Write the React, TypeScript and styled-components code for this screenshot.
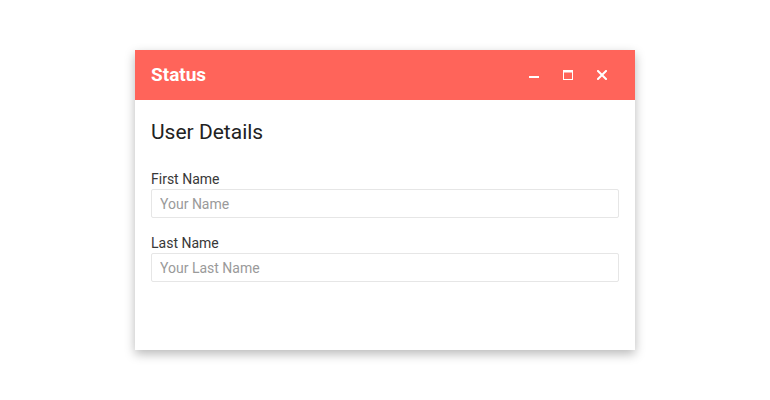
import styled, { createGlobalStyle } from "styled-components";

const GlobalStyle = createGlobalStyle`
    html, body {
        margin: 0;
        padding: 0;
        background: #ffffff;
    }
    body {
        font-family: Roboto, "Liberation Sans", Arial, sans-serif;
    }
`;

const Page = styled.div`
    width: 770px;
    height: 400px;
    display: flex;
    justify-content: center;
    padding-top: 50px;
    box-sizing: border-box;
`;

const Window = styled.div`
    width: 500px;
    height: 300px;
    background: #ffffff;
    display: flex;
    flex-direction: column;
    box-shadow: 0 4px 10px rgba(0, 0, 0, 0.28);
`;

const TitleBar = styled.div`
    height: 50px;
    background-color: #ff645a;
    display: flex;
    align-items: center;
    padding: 0 16px;
`;

const Title = styled.h1`
    flex: 1;
    margin: 0 0 1px;
    color: #ffffff;
    font-size: 19px;
    font-weight: 700;
`;

const Controls = styled.div`
    display: flex;
    align-items: center;
    gap: 14px;
    margin-right: 7px;
`;

const ControlBtn = styled.button`
    width: 20px;
    height: 20px;
    padding: 0;
    border: none;
    background: none;
    display: flex;
    align-items: center;
    justify-content: center;
    cursor: pointer;
`;

const Body = styled.div`
    padding: 16px;
    display: flex;
    flex-direction: column;
`;

const Heading = styled.h2`
    margin: 4px 0 27px;
    font-size: 21px;
    font-weight: 400;
    color: #222222;
`;

const Field = styled.div`
    display: flex;
    flex-direction: column;
    margin-bottom: 17px;
`;

const Label = styled.label`
    font-size: 14px;
    color: #383838;
    line-height: 17px;
    margin-bottom: 1px;
`;

const Input = styled.input`
    height: 29px;
    box-sizing: border-box;
    border: 1px solid #e6e6e6;
    border-radius: 2px;
    padding: 0 8px;
    font-family: inherit;
    font-size: 14px;
    color: #333333;
    outline: none;

    &::placeholder {
        color: #9a9a9a;
    }
`;

const MinimizeIcon = () => (
    <svg width="10" height="10" viewBox="0 0 10 10">
        <rect x="0" y="6" width="10" height="2" fill="#fff" />
    </svg>
);

const MaximizeIcon = () => (
    <svg width="10" height="10" viewBox="0 0 10 10">
        <rect x="0.5" y="0.5" width="9" height="9" fill="none" stroke="#fff" strokeWidth="1" />
        <rect x="0" y="0" width="10" height="2.5" fill="#fff" />
    </svg>
);

const CloseIcon = () => (
    <svg width="10" height="10" viewBox="0 0 10 10">
        <path d="M1 1 L9 9 M9 1 L1 9" stroke="#fff" strokeWidth="2" strokeLinecap="square" />
    </svg>
);

const App: React.FC = () => {
    return (
        <>
            <GlobalStyle />
            <Page>
                <Window>
                    <TitleBar>
                        <Title>Status</Title>
                        <Controls>
                            <ControlBtn aria-label="minimize"><MinimizeIcon /></ControlBtn>
                            <ControlBtn aria-label="maximize"><MaximizeIcon /></ControlBtn>
                            <ControlBtn aria-label="close"><CloseIcon /></ControlBtn>
                        </Controls>
                    </TitleBar>
                    <Body>
                        <Heading>User Details</Heading>
                        <Field>
                            <Label>First Name</Label>
                            <Input placeholder="Your Name" />
                        </Field>
                        <Field>
                            <Label>Last Name</Label>
                            <Input placeholder="Your Last Name" />
                        </Field>
                    </Body>
                </Window>
            </Page>
        </>
    );
};

export default App;
